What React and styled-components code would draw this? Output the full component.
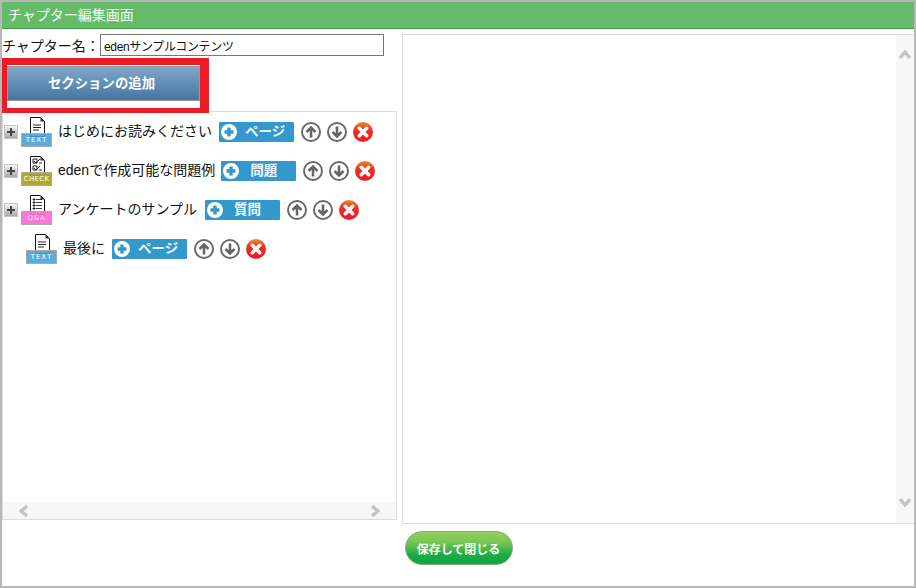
import React from 'react';
import styled, { createGlobalStyle } from 'styled-components';

const GlobalStyle = createGlobalStyle`
  html, body {
    margin: 0;
    padding: 0;
    background: #fff;
  }
  body {
    font-family: "Liberation Sans", "Noto Sans CJK JP", sans-serif;
    color: #111;
  }
`;

const Win = styled.div`
  box-sizing: border-box;
  width: 916px;
  height: 588px;
  border: 2px solid #b8b8b8;
  display: flex;
  flex-direction: column;
  background: #fff;
`;

const TitleBar = styled.div`
  box-sizing: border-box;
  height: 27px;
  flex: none;
  padding-left: 6px;
  background: #66bb6a;
  border-bottom: 1px solid #43a047;
  color: #f4fff4;
  font-size: 14px;
  line-height: 26px;
`;

const Body = styled.div`
  display: grid;
  grid-template-columns: 395px 512px;
  column-gap: 5px;
  height: 490px;
  padding-top: 5px;
  flex: none;
`;

const LeftCol = styled.div`
  display: flex;
  flex-direction: column;
  height: 486px;
`;

const NameRow = styled.div`
  display: flex;
  align-items: center;
  height: 22px;
  flex: none;
  font-size: 14px;
`;

const NameLabel = styled.label`
  width: 98px;
  white-space: nowrap;
`;

const NameInput = styled.input`
  box-sizing: border-box;
  width: 284px;
  height: 22px;
  padding: 0 3px;
  border: 1px solid #777;
  font-family: inherit;
  font-size: 12px;
  letter-spacing: -0.35px;
  color: #111;
  outline: none;
`;

const AddWrap = styled.div`
  position: relative;
  width: 193px;
  margin: 10px 0 10px 5px;
  flex: none;
`;

const AddButton = styled.button`
  display: block;
  box-sizing: border-box;
  width: 193px;
  height: 35px;
  padding: 0 4px 3px 0;
  border: 1px solid #9a9a9a;
  background: linear-gradient(#80a8ca, #44759f);
  color: #fff;
  font-family: inherit;
  font-size: 13.4px;
  font-weight: bold;
`;

const Highlight = styled.div`
  position: absolute;
  top: -8px;
  left: -5px;
  right: -9px;
  bottom: -12px;
  border-style: solid;
  border-color: #ed1c24;
  border-width: 7px 9px 5px 5px;
  pointer-events: none;
`;

const TreePanel = styled.div`
  box-sizing: border-box;
  height: 409px;
  flex: none;
  border: 1px solid #dcdcdc;
  display: flex;
  flex-direction: column;
`;

const Tree = styled.div`
  flex: 1;
  padding-top: 5px;
  display: flex;
  flex-direction: column;
  gap: 9px;
`;

const Row = styled.div`
  display: flex;
  align-items: center;
  height: 30px;
  padding-left: ${p => (p.$leaf ? '23px' : '1px')};
`;

const Toggle = styled.span`
  box-sizing: border-box;
  position: relative;
  width: 14px;
  height: 14px;
  margin-right: 3px;
  flex: none;
  border: 1px solid #c4c4c4;
  background: linear-gradient(#f4f4f4, #a8a8a8);

  &::before {
    content: '';
    position: absolute;
    left: 2px;
    right: 2px;
    top: 5px;
    height: 2px;
    background: #444;
  }
  &::after {
    content: '';
    position: absolute;
    top: 2px;
    bottom: 2px;
    left: 5px;
    width: 2px;
    background: #444;
  }
`;

const FileIconBox = styled.span`
  position: relative;
  display: block;
  width: 31px;
  height: 30px;
  flex: none;
  margin-right: 6px;
`;

const DocSvg = styled.svg`
  position: absolute;
  left: 9px;
  top: 0;
`;

const Tag = styled.span`
  box-sizing: border-box;
  position: absolute;
  left: 0;
  bottom: 0;
  width: 31px;
  height: 14px;
  border: 1px solid #aaa;
  background: ${p => p.$color};
  color: ${p => p.$ink};
  font-family: "DejaVu Sans", sans-serif;
  font-size: 7px;
  line-height: 12px;
  text-align: center;
  letter-spacing: ${p => p.$track}px;
  white-space: nowrap;
`;

const RowLabel = styled.span`
  font-size: 14px;
  white-space: nowrap;
  margin-right: ${p => p.$gap}px;
  position: relative;
  top: -2px;
`;

const ItemButton = styled.button`
  position: relative;
  width: 75px;
  height: 20px;
  flex: none;
  padding: 0 0 0 ${p => p.$inset}px;
  border: 0;
  border-radius: 1px;
  background: #3398cc;
  color: #f4fbff;
  font-family: inherit;
  font-size: 13.5px;
  font-weight: bold;
  line-height: 20px;
  text-align: left;
  margin-right: 7px;
  white-space: nowrap;
`;

const PlusBadge = styled.svg`
  position: absolute;
  left: 2px;
  top: 2px;
`;

const RoundIcon = styled.svg`
  display: block;
  flex: none;
  margin-right: ${p => p.$gap ?? 6}px;
`;

const HScroll = styled.div`
  height: 17px;
  flex: none;
  display: flex;
  align-items: center;
  justify-content: space-between;
  padding: 0 16px;
  background: #f7f7f7;
`;

const PreviewPanel = styled.div`
  box-sizing: border-box;
  height: 490px;
  border: 1px solid #dcdcdc;
  border-right: 0;
  display: flex;
  justify-content: flex-end;
`;

const VScroll = styled.div`
  width: 18px;
  display: flex;
  flex-direction: column;
  align-items: center;
  justify-content: space-between;
  padding: 15px 0 16px;
  box-sizing: border-box;
  background: #f7f7f7;
`;

const Footer = styled.div`
  flex: 1;
  display: flex;
  justify-content: center;
  padding: 7px 0 0 1px;
  align-items: flex-start;
`;

const SaveButton = styled.button`
  box-sizing: border-box;
  width: 108px;
  height: 34px;
  padding: 0;
  border: 1px solid #8da88a;
  border-radius: 17px;
  background: linear-gradient(#8fd05c 0%, #7cc754 30%, #1aab44 72%, #10a640 100%);
  color: #fff;
  font-family: inherit;
  font-size: 12px;
  font-weight: bold;
`;

const Doc = ({ kind }) => (
  <DocSvg width="15" height="20" viewBox="0 0 15 20">
    <path d="M.5.5h10l4 4v15H.5z" fill="#fff" stroke="#111" />
    <path d="M10.5.5v4h4z" fill="#333" />
    {kind === 'text' && <path d="M3 8h8M3 10.500h8M3 13h6" stroke="#222" />}
    {kind === 'check' && (
      <>
        <path d="M3 3h4v4H3zM3 10h4v4H3z" fill="none" stroke="#222" />
        <path d="M4 5l2 2 4-4M4 12l2 2 4-4M9 7h3M9 14h3" fill="none" stroke="#222" />
      </>
    )}
    {kind === 'qa' && (
      <path d="M3 4h2v1H3zM3 7h2v1H3zM3 10h2v1H3zM3 13h2v1H3zM6 4.500h6M6 7.500h6M6 10.500h6M6 13.500h6" fill="#111" stroke="#222" strokeWidth=".9" />
    )}
  </DocSvg>
);

const TAGS = {
  text: { label: 'TEXT', color: 'rgba(70,160,214,.88)', ink: '#fff', track: 1 },
  check: { label: 'CHECK', color: 'rgba(168,164,40,.95)', ink: '#fff', track: 0.3 },
  qa: { label: 'Q&A', color: 'rgba(250,110,210,.92)', ink: '#ffd8f2', track: 0.8 },
};

const FileIcon = ({ kind }) => (
  <FileIconBox>
    <Doc kind={kind} />
    <Tag $color={TAGS[kind].color} $ink={TAGS[kind].ink} $track={TAGS[kind].track}>
      {TAGS[kind].label}
    </Tag>
  </FileIconBox>
);

const Arrow = ({ up, gap }) => (
  <RoundIcon $gap={gap} width="20" height="20" viewBox="0 0 20 20">
    <circle cx="10" cy="10" r="9" fill="#fff" stroke="#6a6a6a" strokeWidth="2" />
    <path
      d={up ? 'M10 15.500V5.500M5.500 10L10 5.500 14.500 10' : 'M10 4.500v10M5.500 10L10 14.500 14.500 10'}
      fill="none"
      stroke="#666"
      strokeWidth="2.600"
    />
  </RoundIcon>
);

const Remove = () => (
  <RoundIcon $gap={0} width="20" height="20" viewBox="0 0 20 20">
    <defs>
      <linearGradient id="removeFill" x1="0" y1="0" x2="0" y2="1">
        <stop offset="0" stopColor="#ef8a2a" />
        <stop offset=".4" stopColor="#ee2f24" />
        <stop offset="1" stopColor="#ea1c2c" />
      </linearGradient>
    </defs>
    <circle cx="10" cy="10" r="10" fill="url(#removeFill)" />
    <path d="M6.300 6.300l7.400 7.400M13.700 6.300l-7.400 7.400" stroke="#fff" strokeWidth="3.600" strokeLinecap="round" />
  </RoundIcon>
);

const Chevron = ({ dir }) => {
  const paths = {
    left: 'M8 1L2 6l6 5',
    right: 'M2 1l6 5-6 5',
    up: 'M1 8l5-6 5 6',
    down: 'M1 2l5 6 5-6',
  };
  const flat = dir === 'up' || dir === 'down';
  return (
    <svg width={flat ? 12 : 10} height={flat ? 10 : 12} viewBox={flat ? '0 0 12 10' : '0 0 10 12'}>
      <path d={paths[dir]} fill="none" stroke="#c4c4c4" strokeWidth="3.400" />
    </svg>
  );
};

const items = [
  { id: 1, kind: 'text', title: 'はじめにお読みください', add: 'ページ', inset: 26, gap: 7 },
  { id: 2, kind: 'check', title: 'edenで作成可能な問題例', add: '問題', inset: 29, gap: 6 },
  { id: 3, kind: 'qa', title: 'アンケートのサンプル', add: '質問', inset: 29, gap: 8 },
  { id: 4, kind: 'text', title: '最後に', add: 'ページ', inset: 26, gap: 7, leaf: true },
];

export default function App() {
  return (
    <>
      <GlobalStyle />
      <Win>
        <TitleBar>チャプター編集画面</TitleBar>
        <Body>
          <LeftCol>
            <NameRow>
              <NameLabel>チャプター名：</NameLabel>
              <NameInput defaultValue="edenサンプルコンテンツ" />
            </NameRow>
            <AddWrap>
              <AddButton>セクションの追加</AddButton>
              <Highlight />
            </AddWrap>
            <TreePanel>
              <Tree>
                {items.map(item => (
                  <Row key={item.id} $leaf={item.leaf}>
                    {!item.leaf && <Toggle />}
                    <FileIcon kind={item.kind} />
                    <RowLabel $gap={item.gap}>{item.title}</RowLabel>
                    <ItemButton $inset={item.inset}>
                      <PlusBadge width="16" height="16" viewBox="0 0 16 16">
                        <circle cx="8" cy="8" r="8" fill="#fff" />
                        <path d="M8 3.500v9M3.500 8h9" stroke="#3398cc" strokeWidth="3.400" />
                      </PlusBadge>
                      {item.add}
                    </ItemButton>
                    <Arrow up />
                    <Arrow />
                    <Remove />
                  </Row>
                ))}
              </Tree>
              <HScroll>
                <Chevron dir="left" />
                <Chevron dir="right" />
              </HScroll>
            </TreePanel>
          </LeftCol>
          <PreviewPanel>
            <VScroll>
              <Chevron dir="up" />
              <Chevron dir="down" />
            </VScroll>
          </PreviewPanel>
        </Body>
        <Footer>
          <SaveButton>保存して閉じる</SaveButton>
        </Footer>
      </Win>
    </>
  );
}
